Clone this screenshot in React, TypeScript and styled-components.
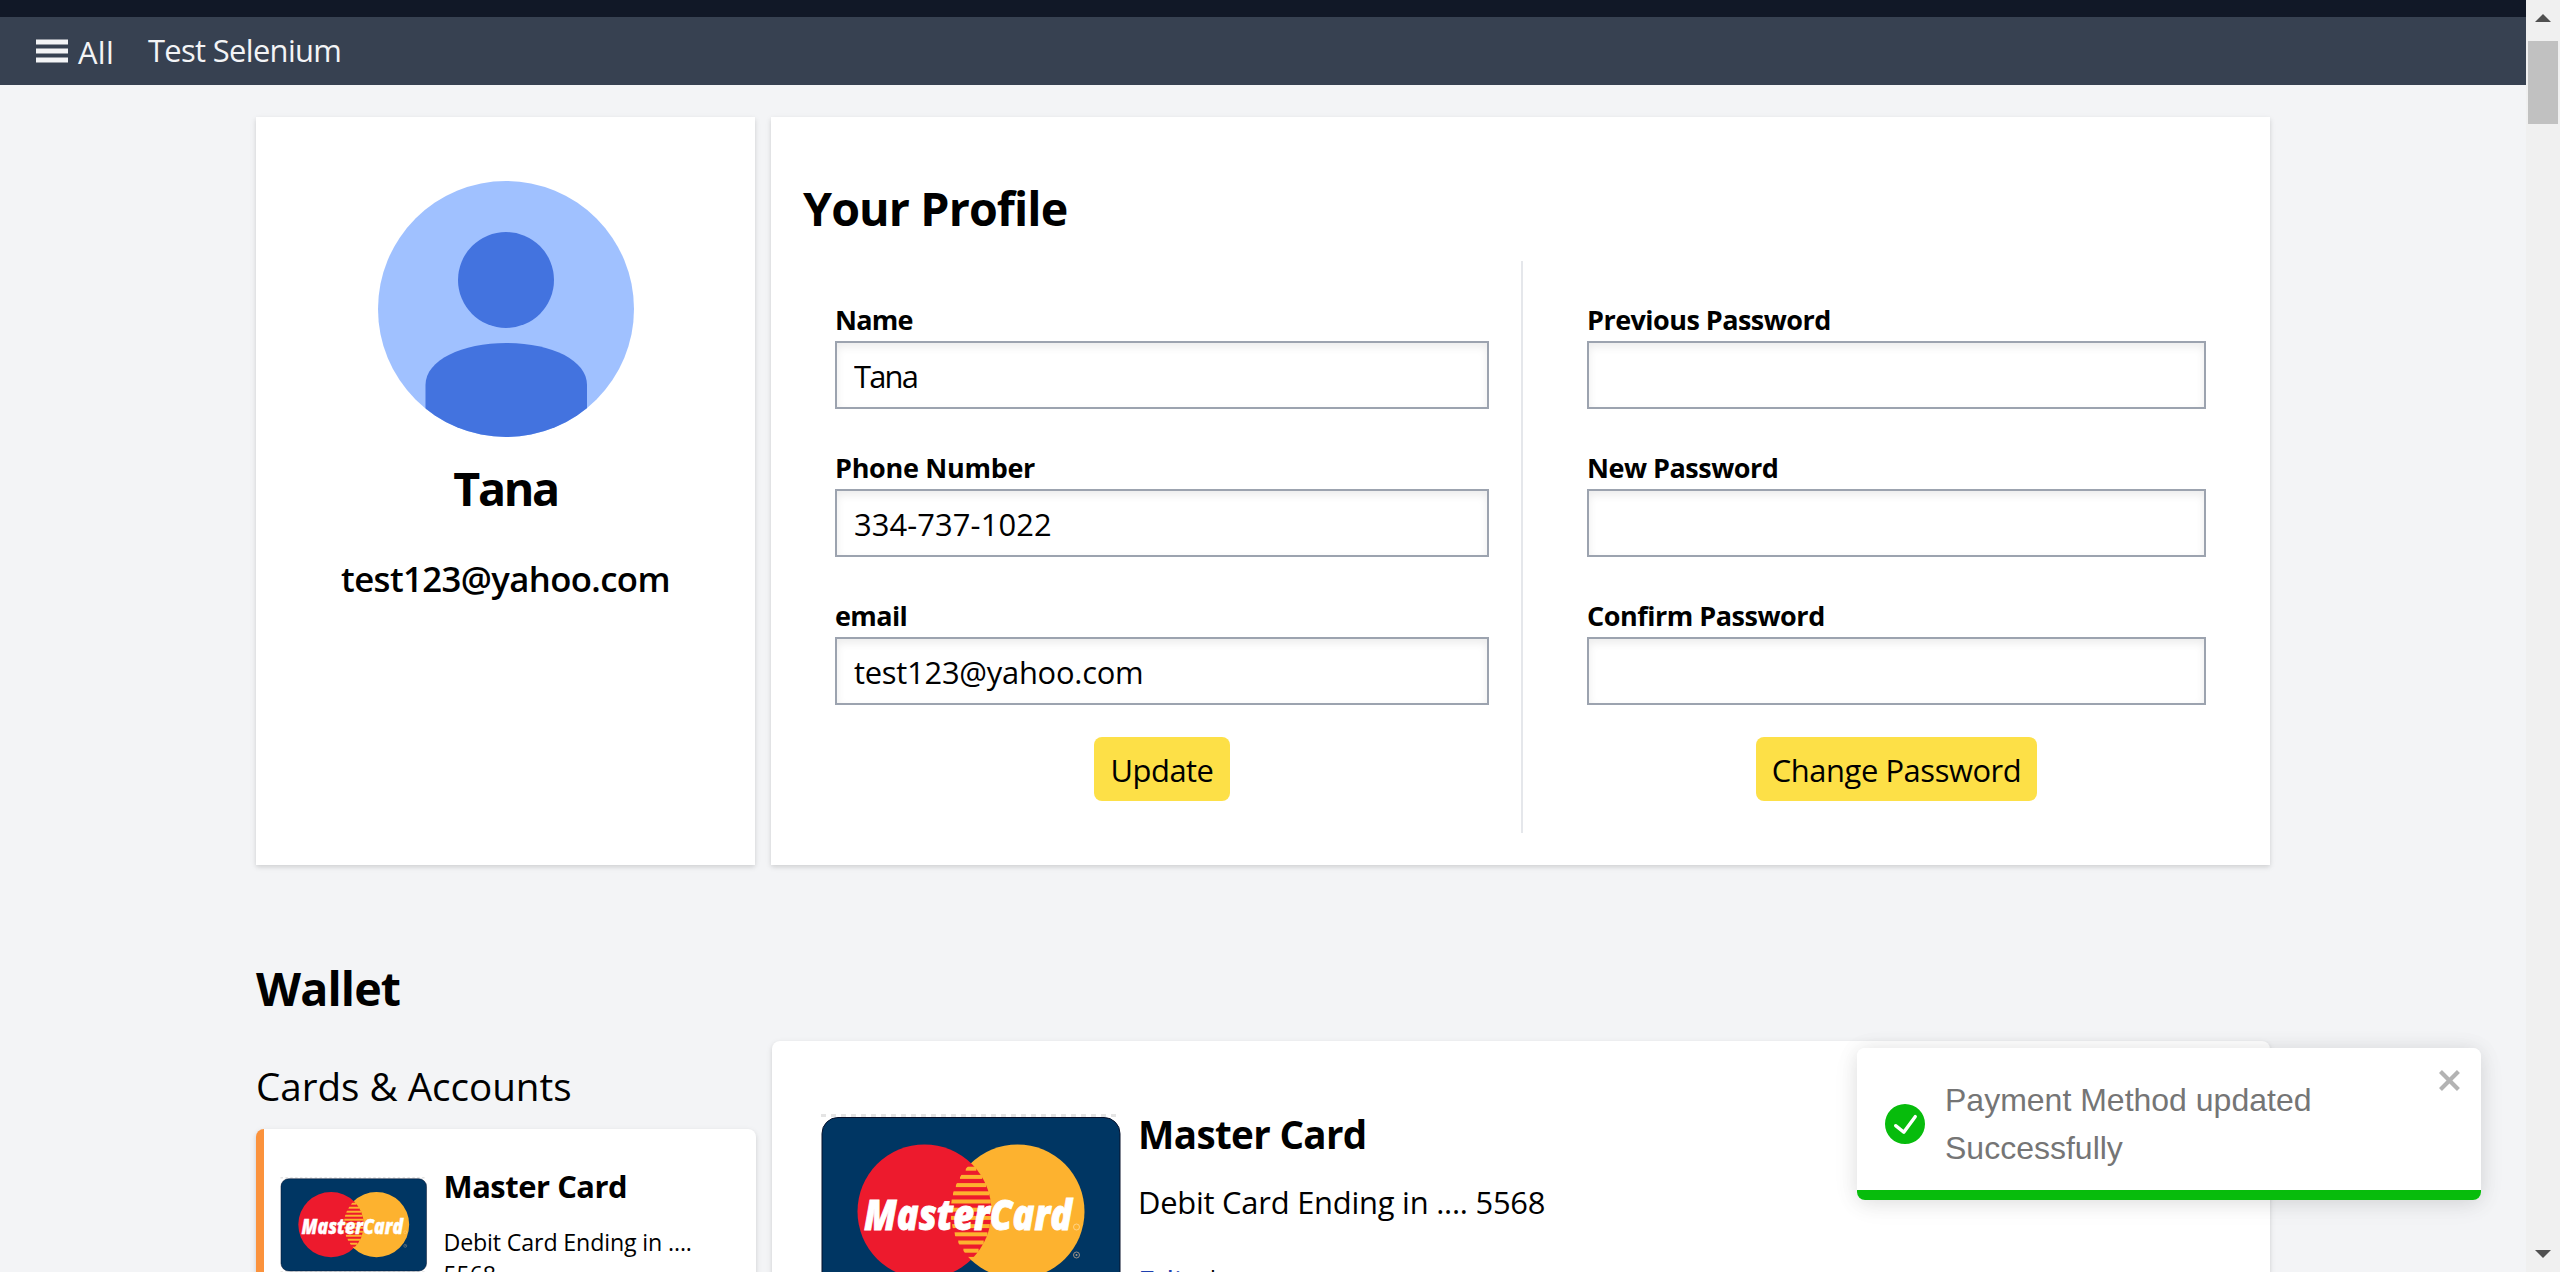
import React from 'react';
import styled, { createGlobalStyle } from 'styled-components';

const GlobalStyle = createGlobalStyle`
  *, *::before, *::after { box-sizing: border-box; }
  body {
    margin: 0;
    overflow: hidden;
    background: #f3f4f6;
    color: #000;
    font-family: "Open Sans", "Noto Sans", sans-serif;
    font-variant-ligatures: none;
  }
  h1, h2, h3, p { margin: 0; }
`;

const cardShadow = '0 2px 6px rgba(0, 0, 0, 0.1), 0 2px 4px rgba(0, 0, 0, 0.06)';

const Window = styled.div`
  position: relative;
  display: flex;
  width: 2560px;
  height: 1272px;
  overflow: hidden;
`;

const Page = styled.div`
  flex: 1;
  min-width: 0;
  height: 1272px;
  overflow: hidden;
`;

const TopStrip = styled.div`
  height: 17px;
  background: #111827;
`;

const Nav = styled.nav`
  display: flex;
  align-items: center;
  height: 68px;
  padding: 0 36px 2px;
  background: #374151;
  color: #f3f4f6;
`;

const MenuButton = styled.div`
  display: flex;
  align-items: center;
  gap: 10px;
  width: 112px;
`;

const MenuIcon = styled.svg`
  width: 32px;
  height: 24px;
  margin-top: 2px;
`;

const NavText = styled.span<{ $spacing: number; $drop?: number }>`
  padding-top: ${(p) => p.$drop ?? 0}px;
  font-size: 30.9px;
  line-height: 48px;
  letter-spacing: ${(p) => p.$spacing}px;
  white-space: nowrap;
`;

const Container = styled.main`
  width: 2014px;
  margin: 32px 0 0 256px;
`;

const ProfileGrid = styled.section`
  display: grid;
  grid-template-columns: 499px 1fr;
  gap: 16px;
  height: 748px;
`;

const Panel = styled.div`
  background: #fff;
  box-shadow: ${cardShadow};
`;

const AvatarPanel = styled(Panel)`
  display: flex;
  flex-direction: column;
  align-items: center;
  padding-top: 64px;
`;

const Avatar = styled.svg`
  width: 256px;
  height: 256px;
`;

const Heading = styled.h1<{ $spacing: number; $top?: number }>`
  height: 64px;
  margin-top: ${(p) => p.$top ?? 0}px;
  font-size: 46.6px;
  font-weight: 700;
  line-height: 66px;
  letter-spacing: ${(p) => p.$spacing}px;
`;

const AvatarEmail = styled.p`
  margin-top: 32px;
  font-size: 34.7px;
  font-weight: 600;
  line-height: 56px;
  letter-spacing: -0.6px;
`;

const FormPanel = styled(Panel)`
  padding: 58px 32px 32px;
`;

const Columns = styled.div`
  display: grid;
  grid-template-columns: 718px 1fr;
  margin-top: 22px;
`;

const Column = styled.form<{ $divided?: boolean }>`
  display: flex;
  flex-direction: column;
  align-items: center;
  gap: 39px;
  height: 572px;
  padding: 39px 32px 32px ${(p) => (p.$divided ? 64 : 32)}px;
  border-left: ${(p) => (p.$divided ? '2px solid #e5e7eb' : 'none')};
`;

const Field = styled.label`
  display: flex;
  flex-direction: column;
  gap: 1px;
  width: 100%;
`;

const Label = styled.span<{ $spacing: number }>`
  font-size: 27px;
  font-weight: 700;
  line-height: 40px;
  letter-spacing: ${(p) => p.$spacing}px;
`;

const Input = styled.input<{ $spacing?: number }>`
  width: 100%;
  height: 68px;
  padding: 2px 17px 0;
  border: 2px solid #9ca3af;
  border-radius: 0;
  outline: none;
  background: #fff;
  box-shadow: inset 0 4px 8px rgba(0, 0, 0, 0.08);
  color: #000;
  font: 400 30.9px "Open Sans", "Noto Sans", sans-serif;
  letter-spacing: ${(p) => p.$spacing ?? 0}px;
`;

const Button = styled.button<{ $width: number; $spacing: number }>`
  width: ${(p) => p.$width}px;
  height: 64px;
  margin-top: -7px;
  padding: 2px 0 0;
  border: 0;
  border-radius: 8px;
  background: #fde047;
  color: #000;
  font: 400 30.9px/48px "Open Sans", "Noto Sans", sans-serif;
  letter-spacing: ${(p) => p.$spacing}px;
  white-space: nowrap;
`;

const WalletGrid = styled.section`
  display: grid;
  grid-template-columns: 500px 1fr;
  gap: 16px;
  margin-top: 22px;
`;

const AccountList = styled.div`
  padding-top: 17px;
`;

const ListTitle = styled.h2`
  font-size: 38.6px;
  font-weight: 400;
  line-height: 56px;
`;

const AccountCard = styled.div`
  display: flex;
  align-items: flex-start;
  gap: 16px;
  height: 260px;
  margin-top: 15px;
  padding: 33px 16px;
  border-left: 8px solid #fb923c;
  border-radius: 8px;
  background: #fff;
  box-shadow: ${cardShadow};
`;

const AccountDetail = styled.div`
  display: flex;
  align-items: flex-start;
  gap: 16px;
  height: 420px;
  padding: 65px 48px;
  border-radius: 8px;
  background: #fff;
  box-shadow: ${cardShadow};
`;

const Logo = styled.svg<{ $width: number; $top: number }>`
  flex: none;
  width: ${(p) => p.$width}px;
  height: ${(p) => (p.$width * 196) / 302}px;
  margin-top: ${(p) => p.$top}px;
`;

const LogoText = styled.text`
  font: italic 800 42px "Open Sans", sans-serif;
  fill: #fff;
  stroke: #fff;
  stroke-width: 0.8px;
`;

const CardInfo = styled.div<{ $width?: number }>`
  width: ${(p) => (p.$width ? `${p.$width}px` : 'auto')};
`;

const CardName = styled.h3<{ $large?: boolean }>`
  font-size: ${(p) => (p.$large ? 38.6 : 30.9)}px;
  font-weight: 700;
  line-height: ${(p) => (p.$large ? 56 : 48)}px;
  letter-spacing: ${(p) => (p.$large ? -0.65 : -0.46)}px;
`;

const CardText = styled.p<{ $large?: boolean }>`
  margin-top: 16px;
  font-size: ${(p) => (p.$large ? 30.9 : 23.2)}px;
  line-height: ${(p) => (p.$large ? 48 : 32)}px;
  letter-spacing: ${(p) => (p.$large ? -0.23 : -0.14)}px;
`;

const CardActions = styled.div`
  display: flex;
  gap: 12px;
  margin-top: 31px;
  font-size: 30.9px;
  line-height: 48px;
`;

const EditLink = styled.span`
  color: #1e40af;
`;

const Separator = styled.span`
  font-size: 29px;
`;

const Toast = styled.div`
  position: absolute;
  top: 1048px;
  left: 1857px;
  display: flex;
  flex-direction: column;
  width: 624px;
  height: 152px;
  overflow: hidden;
  border-radius: 8px;
  background: #fff;
`;

const ToastShadow = styled.div`
  position: absolute;
  top: 1048px;
  left: 1857px;
  width: 624px;
  height: 152px;
  border-radius: 8px;
  box-shadow: 0 2px 20px rgba(0, 0, 0, 0.1), 0 4px 30px rgba(0, 0, 0, 0.05);
`;

const ToastBody = styled.div`
  display: flex;
  flex: 1;
  align-items: flex-start;
  padding: 16px 16px 0 28px;
`;

const ToastIcon = styled.svg`
  flex: none;
  width: 40px;
  height: 40px;
  margin: 40px 20px 0 0;
`;

const ToastText = styled.p`
  flex: 1;
  padding-top: 12px;
  color: #757575;
  font: 400 32px/48px "Liberation Sans", Arial, sans-serif;
`;

const CloseIcon = styled.svg`
  flex: none;
  width: 28px;
  height: 32px;
`;

const ToastProgress = styled.div`
  height: 10px;
  background: #07bc0c;
`;

const Scrollbar = styled.div`
  display: flex;
  flex-direction: column;
  align-items: center;
  justify-content: space-between;
  width: 34px;
  height: 1272px;
  padding: 14px 0;
  background: #f0f0f0;
`;

const ScrollTop = styled.div`
  display: flex;
  flex-direction: column;
  align-items: center;
  gap: 19px;
`;

const Thumb = styled.div`
  width: 30px;
  height: 83px;
  background: #c1c1c1;
`;

const Arrow = styled.svg`
  display: block;
  width: 16px;
  height: 8px;
  fill: #505050;
`;

const stripes = [47, 55.2, 63.4, 71.6, 79.8, 88, 96.2, 104.4, 112.6, 120.8, 129, 137.2, 145.4];

function MasterCardLogo({ width, top, id }: { width: number; top: number; id: string }) {
  return (
    <Logo $width={width} $top={top} viewBox="0 0 302 196">
      <defs>
        <clipPath id={id}>
          <circle cx="197.5" cy="97.5" r="67" />
        </clipPath>
      </defs>
      <path d="M1 1.5H301" stroke="#e4e4e4" strokeWidth="3" strokeDasharray="5 5" />
      <path d="M1 194.5H301" stroke="#e4e4e4" strokeWidth="3" strokeDasharray="5 5" />
      <rect x="2" y="3.5" width="298" height="189" rx="16" fill="#003663" stroke="#06102b" />
      <circle cx="197.5" cy="97.5" r="67" fill="#fdb22f" />
      <circle cx="104.5" cy="97.5" r="67" fill="#ed1a2d" />
      <g clipPath={`url(#${id})`}>
        {stripes.map((y) => {
          const d = y + 8 - 97.5;
          const half = Math.sqrt(Math.max(0, 67 * 67 - d * d)) - 46.5;
          const w = Math.max(half, 3);
          return <rect key={y} x={151 - w} y={y + 5.7} width={w * 2} height="4" fill="#fdb22f" />;
        })}
      </g>
      <LogoText x="44" y="116" textLength="208" lengthAdjust="spacingAndGlyphs">
        MasterCard
      </LogoText>
      <g fill="none" stroke="#fff" strokeOpacity="0.45" strokeWidth="0.9">
        <circle cx="256.5" cy="113" r="3" />
        <circle cx="256.5" cy="141" r="3" stroke="#a98" strokeOpacity="1" />
      </g>
      <circle cx="256.5" cy="141" r="1" fill="#a98" />
    </Logo>
  );
}

interface FieldProps {
  label: string;
  spacing: number;
  value?: string;
  valueSpacing?: number;
}

function FormField({ label, spacing, value = '', valueSpacing }: FieldProps) {
  return (
    <Field>
      <Label $spacing={spacing}>{label}</Label>
      <Input defaultValue={value} $spacing={valueSpacing} />
    </Field>
  );
}

export default function App() {
  return (
    <Window>
      <GlobalStyle />
      <Page>
        <TopStrip />
        <Nav>
          <MenuButton>
            <MenuIcon viewBox="0 0 32 24" fill="#f3f4f6">
              <rect y="0.5" width="32" height="5" />
              <rect y="9.5" width="32" height="5" />
              <rect y="18.5" width="32" height="5" />
            </MenuIcon>
            <NavText $spacing={0.3} $drop={4}>All</NavText>
          </MenuButton>
          <NavText $spacing={-0.66}>Test Selenium</NavText>
        </Nav>
        <Container>
          <ProfileGrid>
            <AvatarPanel>
              <Avatar viewBox="0 0 256 256">
                <defs>
                  <clipPath id="avatar-clip">
                    <circle cx="128" cy="128" r="128" />
                  </clipPath>
                </defs>
                <circle cx="128" cy="128" r="128" fill="#a0c1ff" />
                <circle cx="128" cy="99" r="48" fill="#4373df" />
                <path
                  d="M47.5 256V204C47.5 179 84 162 128.5 162S209 179 209 204V256Z"
                  fill="#4373df"
                  clipPath="url(#avatar-clip)"
                />
              </Avatar>
              <Heading $spacing={-2.4} $top={18}>Tana</Heading>
              <AvatarEmail>test123@yahoo.com</AvatarEmail>
            </AvatarPanel>
            <FormPanel>
              <Heading $spacing={-0.9}>Your Profile</Heading>
              <Columns>
                <Column>
                  <FormField label="Name" spacing={-0.75} value="Tana" valueSpacing={-1.8} />
                  <FormField label="Phone Number" spacing={-0.3} value="334-737-1022" valueSpacing={0.1} />
                  <FormField label="email" spacing={-0.6} value="test123@yahoo.com" valueSpacing={-0.25} />
                  <Button type="button" $width={136} $spacing={-0.5}>Update</Button>
                </Column>
                <Column $divided>
                  <FormField label="Previous Password" spacing={-0.54} />
                  <FormField label="New Password" spacing={-0.5} />
                  <FormField label="Confirm Password" spacing={-0.48} />
                  <Button type="button" $width={281} $spacing={-0.42}>Change Password</Button>
                </Column>
              </Columns>
            </FormPanel>
          </ProfileGrid>
          <Heading as="h2" $spacing={-0.87} $top={90}>Wallet</Heading>
          <WalletGrid>
            <AccountList>
              <ListTitle>Cards &amp; Accounts</ListTitle>
              <AccountCard>
                <MasterCardLogo width={147.5} top={15} id="logo-small" />
                <CardInfo $width={290}>
                  <CardName>Master Card</CardName>
                  <CardText>Debit Card Ending in .... 5568</CardText>
                </CardInfo>
              </AccountCard>
            </AccountList>
            <AccountDetail>
              <MasterCardLogo width={302} top={8} id="logo-large" />
              <CardInfo>
                <CardName $large>Master Card</CardName>
                <CardText $large>Debit Card Ending in .... 5568</CardText>
                <CardActions>
                  <EditLink>Edit</EditLink>
                  <Separator>|</Separator>
                </CardActions>
              </CardInfo>
            </AccountDetail>
          </WalletGrid>
        </Container>
      </Page>
      <Scrollbar>
        <ScrollTop>
          <Arrow viewBox="0 0 16 8"><path d="M8 0L16 8H0Z" /></Arrow>
          <Thumb />
        </ScrollTop>
        <Arrow viewBox="0 0 16 8"><path d="M0 0H16L8 8Z" /></Arrow>
      </Scrollbar>
      <ToastShadow />
      <Toast>
        <ToastBody>
          <ToastIcon viewBox="0 0 24 24" fill="#07bc0c">
            <path d="M12 0a12 12 0 1012 12A12.014 12.014 0 0012 0zm6.927 8.2l-6.845 9.289a1.011 1.011 0 01-1.43.188l-4.888-3.908a1 1 0 111.25-1.562l4.076 3.261 6.227-8.451a1 1 0 111.61 1.183z" />
          </ToastIcon>
          <ToastText>
            Payment Method updated
            <br />
            Successfully
          </ToastText>
          <CloseIcon viewBox="0 0 14 16" fill="#b3b3b3">
            <path
              fillRule="evenodd"
              d="M7.71 8.23l3.75 3.75-1.48 1.48-3.75-3.75-3.75 3.75L1 11.98l3.75-3.75L1 4.48 2.48 3l3.75 3.75L9.98 3l1.48 1.48-3.75 3.75z"
            />
          </CloseIcon>
        </ToastBody>
        <ToastProgress />
      </Toast>
    </Window>
  );
}
